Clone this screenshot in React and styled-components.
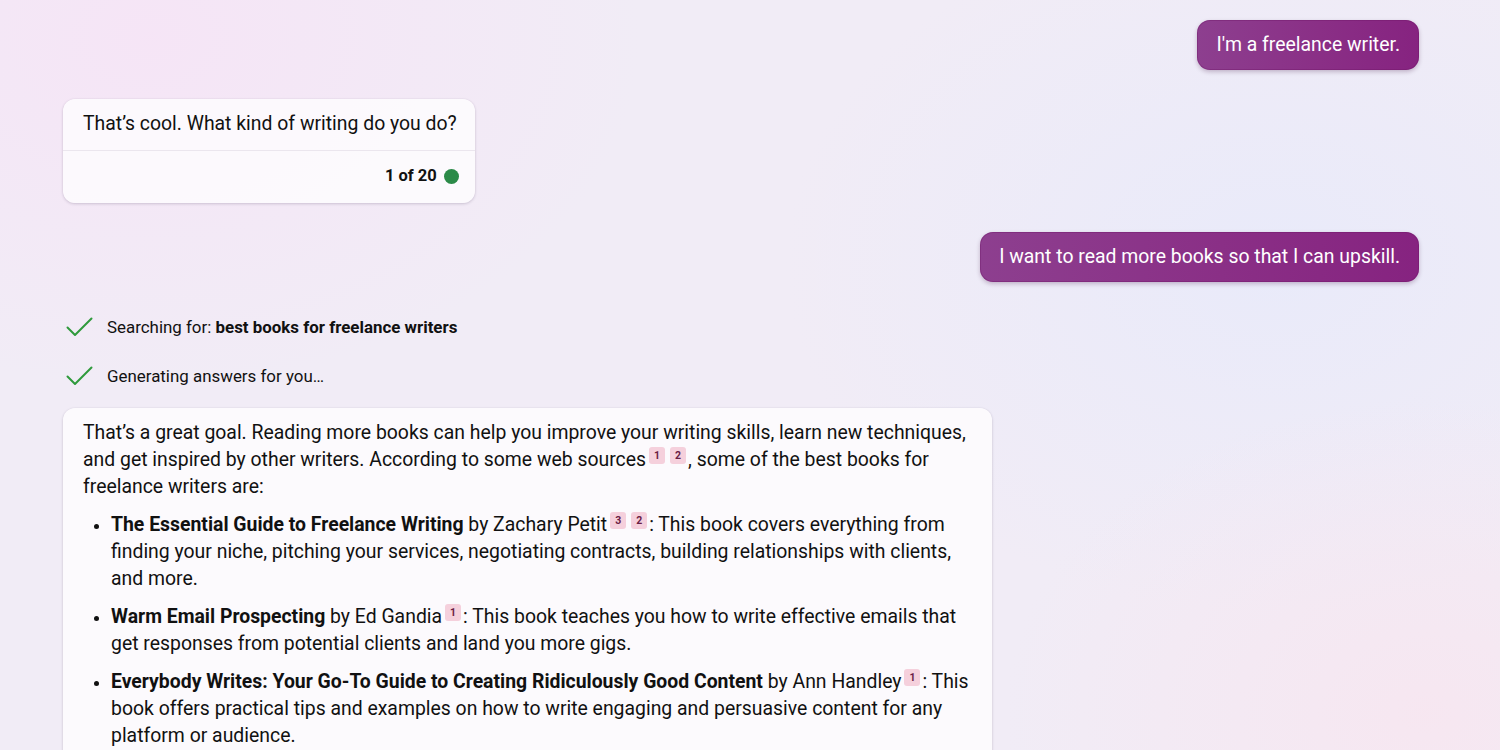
import React from "react";
import styled, { createGlobalStyle } from "styled-components";

const Global = createGlobalStyle`
  html, body { margin: 0; padding: 0; }
  body {
    width: 1500px;
    height: 750px;
    overflow: hidden;
    font-family: Roboto, "Noto Sans", "Liberation Sans", sans-serif;
    color: #111;
    background:
      radial-gradient(ellipse 700px 500px at 10% 5%, rgba(246, 228, 246, 0.9), transparent 70%),
      radial-gradient(ellipse 600px 450px at 95% 95%, rgba(247, 230, 240, 0.9), transparent 70%),
      radial-gradient(ellipse 700px 500px at 85% 35%, rgba(232, 234, 250, 0.9), transparent 70%),
      #f1ecf6;
  }
`;

const Page = styled.div`
  display: flex;
  flex-direction: column;
  padding: 20px 81px 0 63px;
  box-sizing: border-box;
  width: 1500px;
`;

const UserRow = styled.div`
  display: flex;
  justify-content: flex-end;
  margin-bottom: ${(p) => p.$mb || 0}px;
`;

const UserBubble = styled.div`
  background: linear-gradient(90deg, #8d3f8f 0%, #8a2f86 55%, #862380 100%);
  color: #fff;
  font-size: 19.4px;
  line-height: 24px;
  padding: 13px 19px 13px 19px;
  border-radius: 13px;
  box-shadow: 0 2px 4px rgba(60, 10, 60, 0.25), inset 0 0 0 1px rgba(110, 20, 100, 0.35);
  white-space: nowrap;
`;

const BotRow = styled.div`
  display: flex;
  justify-content: flex-start;
  margin-bottom: ${(p) => p.$mb || 0}px;
`;

const Card = styled.div`
  background: rgba(252, 250, 253, 0.96);
  border-radius: 12px;
  box-shadow: 0 1px 3px rgba(40, 20, 60, 0.18), 0 0 1px rgba(40, 20, 60, 0.12);
  width: ${(p) => (p.$w ? `${p.$w}px` : "auto")};
  box-sizing: border-box;
`;

const CardBody = styled.div`
  padding: ${(p) => p.$pad || "11px 18px 13px 20px"};
  font-size: 19.4px;
  line-height: 27px;
`;

const CardFooter = styled.div`
  border-top: 1px solid #ebe6ee;
  display: flex;
  justify-content: flex-end;
  align-items: center;
  gap: 7px;
  padding: 14px 16px 16px;
  font-size: 16.5px;
  font-weight: 700;
  line-height: 22px;
`;

const Dot = styled.span`
  width: 15px;
  height: 15px;
  border-radius: 50%;
  background: #2b8a48;
  display: inline-block;
`;

const StatusRow = styled.div`
  display: flex;
  align-items: center;
  gap: 14px;
  padding-left: 3px;
  font-size: 16.9px;
  line-height: 22px;
  height: 22px;
  margin-bottom: ${(p) => p.$mb || 0}px;
  color: #111;
`;

const Bold = styled.b`
  font-weight: 700;
`;

const Para = styled.p`
  margin: 0 0 11px;
`;

const List = styled.ul`
  margin: 0;
  padding: 0 0 0 28px;
  list-style: disc;
`;

const Item = styled.li`
  margin-bottom: 11px;
  &::marker { font-size: 17px; }
`;

const Cite = styled.span`
  display: inline-block;
  position: relative;
  top: -7px;
  min-width: 16px;
  height: 17px;
  line-height: 17px;
  padding: 0 1px;
  margin: 0 2px 0 3px;
  box-sizing: border-box;
  text-align: center;
  font-size: 10.5px;
  font-weight: 700;
  color: #6a1c45;
  background: #f5d0dc;
  border-radius: 3px;
`;

const Check = () => (
  <svg width="27" height="20" viewBox="0 0 27 20" fill="none">
    <path d="M1.5 10.5 L9 18 L25.5 1.5" stroke="#2f9a3c" strokeWidth="2" strokeLinecap="round" strokeLinejoin="round" />
  </svg>
);

export default function App() {
  return (
    <>
      <Global />
      <Page>
        <UserRow $mb={29}>
          <UserBubble>I'm a freelance writer.</UserBubble>
        </UserRow>
        <BotRow $mb={29}>
          <Card>
            <CardBody>That’s cool. What kind of writing do you do?</CardBody>
            <CardFooter>
              1 of 20 <Dot />
            </CardFooter>
          </Card>
        </BotRow>
        <UserRow $mb={34}>
          <UserBubble>I want to read more books so that I can upskill.</UserBubble>
        </UserRow>
        <StatusRow $mb={27}>
          <Check />
          <span>
            Searching for: <Bold>best books for freelance writers</Bold>
          </span>
        </StatusRow>
        <StatusRow $mb={21}>
          <Check />
          <span>Generating answers for you…</span>
        </StatusRow>
        <BotRow>
          <Card $w={929}>
            <CardBody $pad="11px 20px 20px">
              <Para>
                That’s a great goal. Reading more books can help you improve your writing skills, learn new
                techniques, and get inspired by other writers. According to some web sources
                <Cite>1</Cite>
                <Cite>2</Cite>, some of the best books for freelance writers are:
              </Para>
              <List>
                <Item>
                  <Bold>The Essential Guide to Freelance Writing</Bold> by Zachary Petit<Cite>3</Cite>
                  <Cite>2</Cite>: This book covers everything from finding your niche, pitching your services,
                  negotiating contracts, building relationships with clients, and more.
                </Item>
                <Item>
                  <Bold>Warm Email Prospecting</Bold> by Ed Gandia<Cite>1</Cite>: This book teaches you how to
                  write effective emails that get responses from potential clients and land you more gigs.
                </Item>
                <Item>
                  <Bold>Everybody Writes: Your Go-To Guide to Creating Ridiculously Good Content</Bold> by Ann
                  Handley<Cite>1</Cite>: This book offers practical tips and examples on how to write engaging
                  and persuasive content for any platform or audience.
                </Item>
              </List>
            </CardBody>
          </Card>
        </BotRow>
      </Page>
    </>
  );
}
